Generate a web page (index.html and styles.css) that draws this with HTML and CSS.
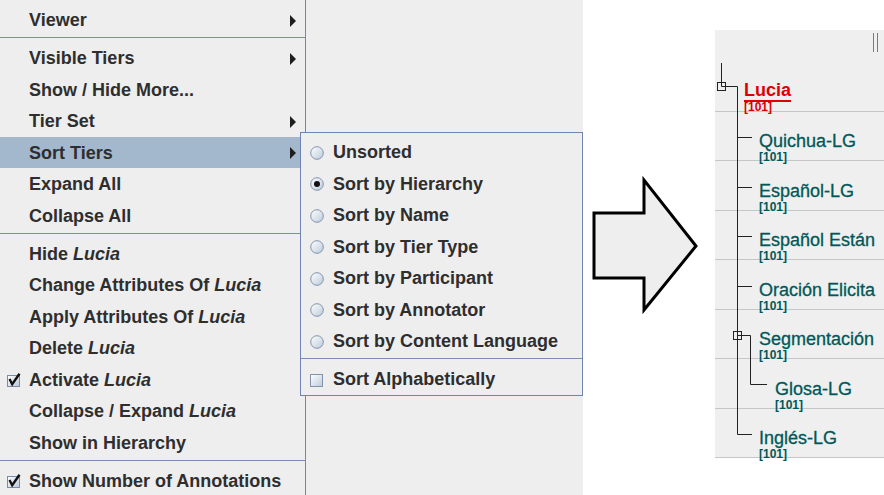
FILE: index.html
```html
<!DOCTYPE html>
<html>
<head>
<meta charset="utf-8">
<link rel="stylesheet" href="styles.css">
</head>
<body>
<div class="page">
  <div class="canvas">
    <div class="menu">
      <div class="item"><span class="icon"></span><span>Viewer</span><span class="sub"></span></div>
      <div class="sep"></div>
      <div class="item"><span class="icon"></span><span>Visible Tiers</span><span class="sub"></span></div>
      <div class="item"><span class="icon"></span><span>Show / Hide More...</span></div>
      <div class="item"><span class="icon"></span><span>Tier Set</span><span class="sub"></span></div>
      <div class="item active"><span class="icon"></span><span>Sort Tiers</span><span class="sub"></span></div>
      <div class="item"><span class="icon"></span><span>Expand All</span></div>
      <div class="item"><span class="icon"></span><span>Collapse All</span></div>
      <div class="sep"></div>
      <div class="item"><span class="icon"></span><span>Hide <i>Lucia</i></span></div>
      <div class="item"><span class="icon"></span><span>Change Attributes Of <i>Lucia</i></span></div>
      <div class="item"><span class="icon"></span><span>Apply Attributes Of <i>Lucia</i></span></div>
      <div class="item"><span class="icon"></span><span>Delete <i>Lucia</i></span></div>
      <div class="item"><svg class="icon" viewBox="0 0 14 14"><defs><linearGradient id="cb1" x1="0" y1="0" x2="1" y2="1"><stop offset="0" stop-color="#ffffff"/><stop offset="1" stop-color="#b9c7d8"/></linearGradient></defs><rect x="0.5" y="2.5" width="12" height="11" fill="url(#cb1)" stroke="#7d8ca3"/><path d="M2.5 6 L5.2 11.2 L12.5 0.8" fill="none" stroke="#111" stroke-width="2.4"/></svg><span>Activate <i>Lucia</i></span></div>
      <div class="item"><span class="icon"></span><span>Collapse / Expand <i>Lucia</i></span></div>
      <div class="item"><span class="icon"></span><span>Show in Hierarchy</span></div>
      <div class="sep"></div>
      <div class="item"><svg class="icon" viewBox="0 0 14 14"><defs><linearGradient id="cb2" x1="0" y1="0" x2="1" y2="1"><stop offset="0" stop-color="#ffffff"/><stop offset="1" stop-color="#b9c7d8"/></linearGradient></defs><rect x="0.5" y="2.5" width="12" height="11" fill="url(#cb2)" stroke="#7d8ca3"/><path d="M2.5 6 L5.2 11.2 L12.5 0.8" fill="none" stroke="#111" stroke-width="2.4"/></svg><span>Show Number of Annotations</span></div>
    </div>

    <div class="submenu">
      <div class="item"><svg class="radio" viewBox="0 0 14 14"><defs><linearGradient id="rg" x1="0" y1="0" x2="1" y2="1"><stop offset="0" stop-color="#ffffff"/><stop offset="1" stop-color="#bccadb"/></linearGradient></defs><circle cx="7" cy="7" r="6.3" fill="url(#rg)" stroke="#8393ab"/></svg><span>Unsorted</span></div>
      <div class="item"><svg class="radio" viewBox="0 0 14 14"><circle cx="7" cy="7" r="6.3" fill="url(#rg)" stroke="#8393ab"/><circle cx="7" cy="7" r="3" fill="#111"/></svg><span>Sort by Hierarchy</span></div>
      <div class="item"><svg class="radio" viewBox="0 0 14 14"><circle cx="7" cy="7" r="6.3" fill="url(#rg)" stroke="#8393ab"/></svg><span>Sort by Name</span></div>
      <div class="item"><svg class="radio" viewBox="0 0 14 14"><circle cx="7" cy="7" r="6.3" fill="url(#rg)" stroke="#8393ab"/></svg><span>Sort by Tier Type</span></div>
      <div class="item"><svg class="radio" viewBox="0 0 14 14"><circle cx="7" cy="7" r="6.3" fill="url(#rg)" stroke="#8393ab"/></svg><span>Sort by Participant</span></div>
      <div class="item"><svg class="radio" viewBox="0 0 14 14"><circle cx="7" cy="7" r="6.3" fill="url(#rg)" stroke="#8393ab"/></svg><span>Sort by Annotator</span></div>
      <div class="item"><svg class="radio" viewBox="0 0 14 14"><circle cx="7" cy="7" r="6.3" fill="url(#rg)" stroke="#8393ab"/></svg><span>Sort by Content Language</span></div>
      <div class="sep"></div>
      <div class="item"><svg class="radio" viewBox="0 0 14 14"><rect x="0.5" y="1.5" width="12" height="12" fill="url(#rg)" stroke="#8393ab"/></svg><span>Sort Alphabetically</span></div>
    </div>
  </div>

  <div class="arrow-zone">
    <svg width="132" height="495" viewBox="0 0 132 495">
      <polygon points="11,213 61,213 61,180 113,246 61,310 61,278 11,278" fill="#eeeeee" stroke="#000" stroke-width="3" stroke-linejoin="miter"/>
    </svg>
  </div>

  <div class="tiers">
    <div class="thead"><div class="grip"></div></div>
    <div class="row root"><span class="name">Lucia</span><span class="count">[101]</span></div>
    <div class="row"><span class="name">Quichua-LG</span><span class="count">[101]</span></div>
    <div class="row"><span class="name">Español-LG</span><span class="count">[101]</span></div>
    <div class="row"><span class="name">Español Están</span><span class="count">[101]</span></div>
    <div class="row"><span class="name">Oración Elicita</span><span class="count">[101]</span></div>
    <div class="row"><span class="name">Segmentación</span><span class="count">[101]</span></div>
    <div class="row deep"><span class="name">Glosa-LG</span><span class="count">[101]</span></div>
    <div class="row"><span class="name">Inglés-LG</span><span class="count">[101]</span></div>
    <svg class="tree" width="169" height="428" viewBox="0 0 169 428">
      <g fill="none" stroke="#222" stroke-width="1">
        <path d="M6.5 33 V52.5"/>
        <rect x="2.5" y="52.5" width="8" height="8"/>
        <path d="M6.5 52.5 V56.5 H22.5 V404.5 H37"/>
        <path d="M22.5 107.5 H37"/>
        <path d="M22.5 157.5 H37"/>
        <path d="M22.5 206.5 H37"/>
        <path d="M22.5 256.5 H37"/>
        <rect x="18.5" y="301.5" width="8" height="8"/>
        <path d="M22.5 305.5 H35.5 V354.5 H52"/>
      </g>
    </svg>
  </div>
</div>
</body>
</html>
```

FILE: styles.css
```css
* { box-sizing: border-box; }
html, body { margin: 0; padding: 0; }
body {
  background: #ffffff;
  font-family: "Liberation Sans", Arial, sans-serif;
  overflow: hidden;
}
.page {
  display: flex;
  width: 884px;
  height: 495px;
}
.canvas {
  position: relative;
  flex: none;
  width: 583px;
  height: 495px;
  background: #eeeeee;
}
.menu {
  width: 306px;
  height: 495px;
  padding-top: 4px;
  border-right: 1px solid #7085b4;
  background: #eeeeee;
}
.item {
  display: flex;
  align-items: center;
  height: 31.5px;
  padding: 2px 0 0 7px;
  font-size: 18px;
  font-weight: bold;
  color: #2e2e2e;
  white-space: nowrap;
}
.item i { font-style: italic; }
.item.active { background: #a3b8cc; }
.icon {
  flex: none;
  width: 14px;
  height: 14px;
  margin-right: 8px;
  overflow: visible;
}
.sub {
  margin-left: auto;
  margin-right: 9px;
  width: 0;
  height: 0;
  border-top: 6.5px solid transparent;
  border-bottom: 6.5px solid transparent;
  border-left: 6px solid #1e1e1e;
}
.sep {
  height: 6.5px;
  padding-top: 1.5px;
}
.sep::before {
  content: "";
  display: block;
  height: 1px;
  background: #7b8db5;
}
.submenu {
  position: absolute;
  left: 300px;
  top: 132px;
  width: 283px;
  height: 264px;
  padding-top: 3px;
  border: 1px solid #7085b4;
  background: #eeeeee;
}
.submenu .item { padding-left: 9px; }
.radio {
  flex: none;
  width: 14px;
  height: 14px;
  margin-right: 9px;
}
.arrow-zone {
  flex: none;
  width: 132px;
  height: 495px;
}
.arrow-zone svg { display: block; }
.tiers {
  position: relative;
  flex: none;
  width: 169px;
  height: 428px;
  margin-top: 30px;
  background: #efefef;
}
.thead {
  display: flex;
  justify-content: flex-end;
  height: 32px;
  padding: 3px 6px 0 0;
}
.grip {
  width: 5px;
  height: 19px;
  border-left: 1.5px solid #6f7a99;
  border-right: 1.5px solid #6f7a99;
}
.row {
  height: 49.5px;
  padding-left: 44px;
  border-bottom: 1px solid #c6c6c6;
  color: #005858;
}
.row.deep { padding-left: 60px; }
.row.root { padding-left: 29px; color: #dd0000; }
.name {
  display: block;
  padding-top: 20.5px;
  font-size: 18px;
  line-height: 18px;
  -webkit-text-stroke: 0.3px currentColor;
}
.count {
  display: block;
  margin-top: 1px;
  font-size: 12px;
  line-height: 12px;
  font-weight: bold;
}
.root .name {
  padding-top: 18.5px;
  font-weight: bold;
  -webkit-text-stroke: 0;
  text-decoration: underline;
  text-underline-offset: 4px;
  text-decoration-thickness: 1.5px;
}
.root .count { margin-top: 2.5px; }
.tree {
  position: absolute;
  left: 0;
  top: 0;
}
```
